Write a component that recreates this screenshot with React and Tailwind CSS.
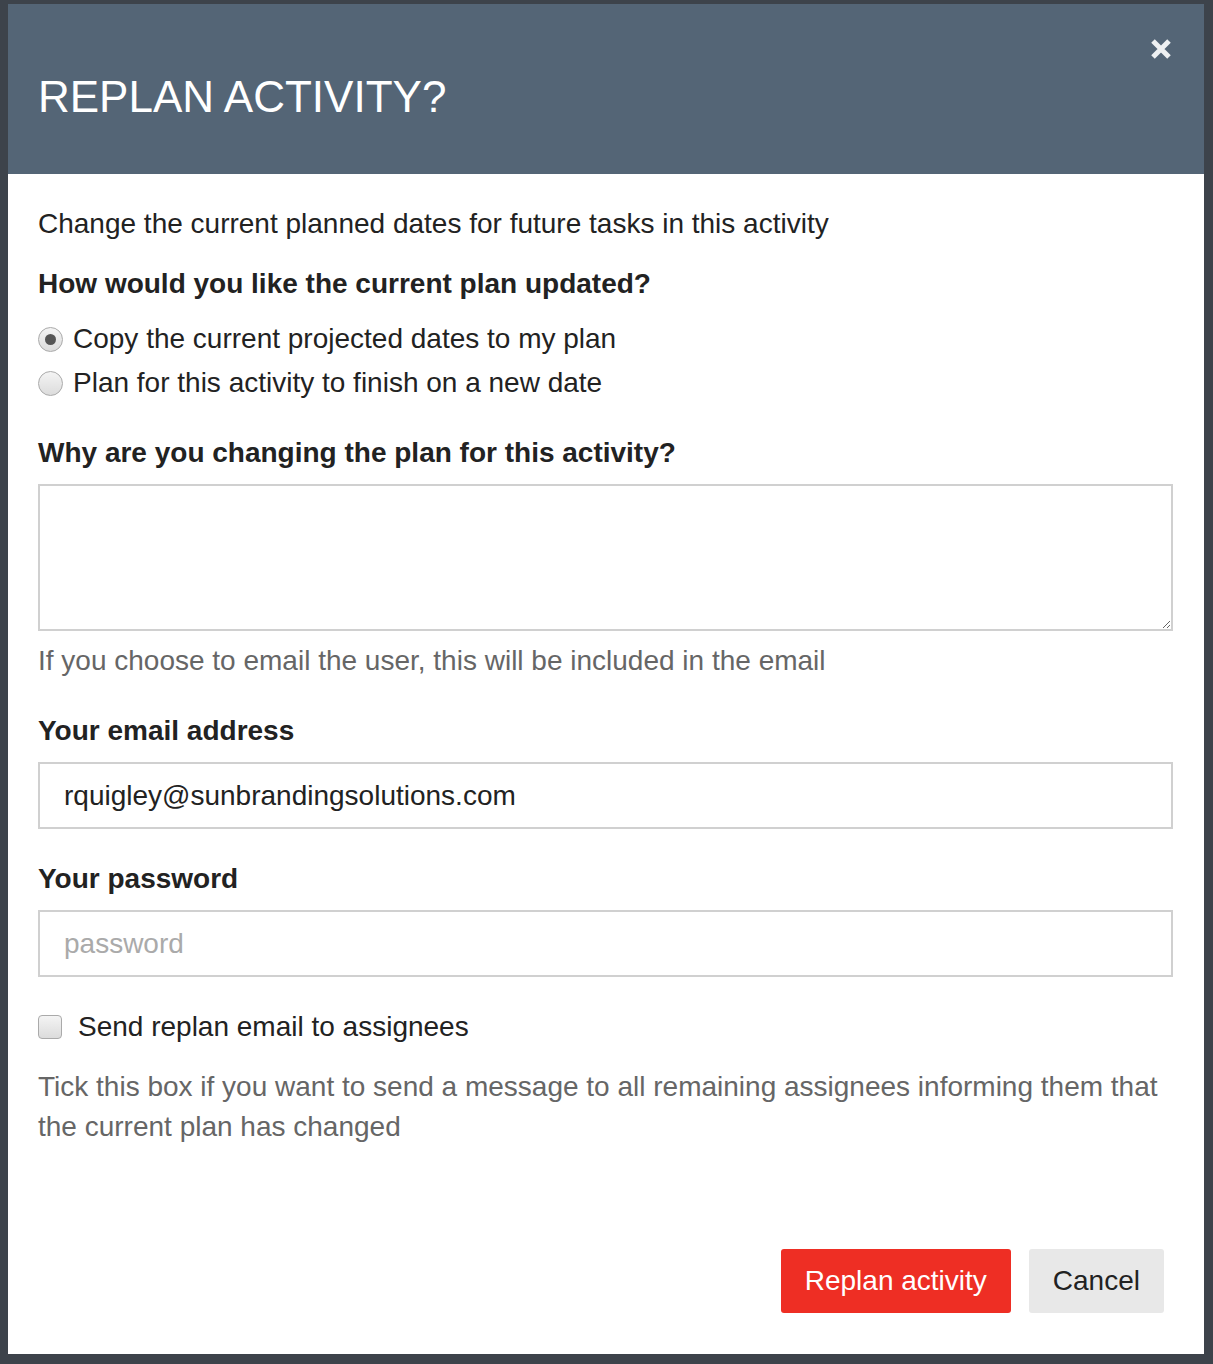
export default function App() {
  return (
    <div className="min-h-[1364px] bg-[#3d434b] pt-[4px] pl-[8px]" style={{ fontFamily: '"Liberation Sans", Arial, sans-serif' }}>
      <div className="w-[1196px] h-[1350px] bg-white flex flex-col">
        <div className="h-[170px] bg-[#546576] relative flex items-center px-[30px] pt-[16px]">
          <h1 className="text-[44px] text-white leading-none">REPLAN ACTIVITY?</h1>
          <button className="absolute right-[28px] top-[30px] w-[30px] h-[30px] flex items-center justify-center">
            <svg width="22" height="22" viewBox="0 0 22 22">
              <path d="M3 3 L19 19 M19 3 L3 19" stroke="#eef0f2" strokeWidth="5" strokeLinecap="butt" />
            </svg>
          </button>
        </div>

        <div className="flex-1 flex flex-col px-[30px] pt-[34px] text-[#222]">
          <p className="text-[28px] leading-[32px]">Change the current planned dates for future tasks in this activity</p>

          <h2 className="mt-[28px] text-[28px] leading-[32px] font-bold">How would you like the current plan updated?</h2>

          <div className="mt-[23px] flex flex-col gap-[12px]">
            <label className="flex items-center gap-[10px] text-[28px] leading-[32px]">
              <span className="w-[25px] h-[25px] rounded-full border border-[#aaa] bg-gradient-to-b from-[#f4f4f4] to-[#dcdcdc] flex items-center justify-center">
                <span className="w-[11px] h-[11px] rounded-full bg-[#555]" />
              </span>
              Copy the current projected dates to my plan
            </label>
            <label className="flex items-center gap-[10px] text-[28px] leading-[32px]">
              <span className="w-[25px] h-[25px] rounded-full border border-[#aaa] bg-gradient-to-b from-[#f4f4f4] to-[#dcdcdc]" />
              Plan for this activity to finish on a new date
            </label>
          </div>

          <h2 className="mt-[38px] text-[28px] leading-[32px] font-bold">Why are you changing the plan for this activity?</h2>
          <textarea className="mt-[15px] w-[1135px] h-[147px] border-2 border-[#d0d0d0] outline-none resize-y" />
          <p className="mt-[14px] text-[28px] leading-[32px] text-[#666]">If you choose to email the user, this will be included in the email</p>

          <h2 className="mt-[38px] text-[28px] leading-[32px] font-bold">Your email address</h2>
          <input
            className="mt-[15px] w-[1135px] h-[67px] border-2 border-[#d0d0d0] px-[24px] text-[28px] text-[#222] outline-none"
            defaultValue="rquigley@sunbrandingsolutions.com"
          />

          <h2 className="mt-[34px] text-[28px] leading-[32px] font-bold">Your password</h2>
          <input
            type="password"
            placeholder="password"
            className="mt-[15px] w-[1135px] h-[67px] border-2 border-[#d0d0d0] px-[24px] text-[28px] outline-none placeholder:text-[#aaa]"
          />

          <label className="mt-[34px] flex items-center gap-[16px] text-[28px] leading-[32px]">
            <span className="w-[24px] h-[24px] rounded-[4px] border border-[#aaa] bg-gradient-to-b from-[#f4f4f4] to-[#dcdcdc]" />
            Send replan email to assignees
          </label>

          <p className="mt-[24px] text-[28px] leading-[40px] text-[#666]">
            Tick this box if you want to send a message to all remaining assignees informing them that the current plan has changed
          </p>

          <div className="mt-[102px] flex justify-end gap-[18px] pr-[10px]">
            <button className="h-[64px] px-[24px] bg-[#ee2e24] rounded-[3px] text-white text-[28px]">Replan activity</button>
            <button className="h-[64px] px-[24px] bg-[#e8e8e8] rounded-[3px] text-[#222] text-[28px]">Cancel</button>
          </div>
        </div>
      </div>
    </div>
  );
}
